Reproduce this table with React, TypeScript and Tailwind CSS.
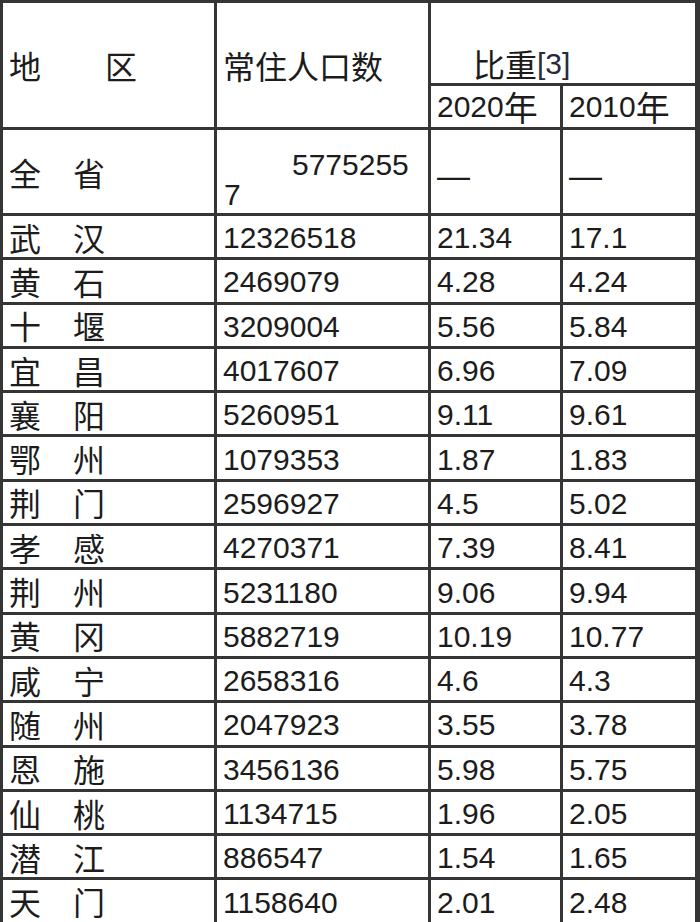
import React from 'react'

const rows: [string, string, string, string][] = [
  ['武　汉', '12326518', '21.34', '17.1'],
  ['黄　石', '2469079', '4.28', '4.24'],
  ['十　堰', '3209004', '5.56', '5.84'],
  ['宜　昌', '4017607', '6.96', '7.09'],
  ['襄　阳', '5260951', '9.11', '9.61'],
  ['鄂　州', '1079353', '1.87', '1.83'],
  ['荆　门', '2596927', '4.5', '5.02'],
  ['孝　感', '4270371', '7.39', '8.41'],
  ['荆　州', '5231180', '9.06', '9.94'],
  ['黄　冈', '5882719', '10.19', '10.77'],
  ['咸　宁', '2658316', '4.6', '4.3'],
  ['随　州', '2047923', '3.55', '3.78'],
  ['恩　施', '3456136', '5.98', '5.75'],
  ['仙　桃', '1134715', '1.96', '2.05'],
  ['潜　江', '886547', '1.54', '1.65'],
  ['天　门', '1158640', '2.01', '2.48'],
]

const cjk = "font-['Noto_Sans_CJK_SC',sans-serif] text-[32px] leading-[32px]"
const num = "font-['Liberation_Sans','Noto_Sans_CJK_SC',sans-serif] text-[30px] leading-[30px]"

export default function App() {
  return (
    <div className="w-[700px] bg-white text-[#1c1c1c]">
      <div className="grid grid-cols-[211px_211px_129px_132px] grid-rows-[80px_41px_83px_repeat(16,41.3px)] gap-[3px] bg-[#353535] pt-[3px] pl-[3px] pr-[5px] overflow-hidden">
        {/* header */}
        <div className={`row-span-2 bg-white flex items-center pl-[6px] whitespace-pre ${cjk}`}>地　　区</div>
        <div className={`row-span-2 bg-white flex items-center pl-[6px] ${cjk}`}>常住人口数</div>
        <div className="col-span-2 bg-white flex items-end pl-[42px] pb-[4px]">
          <span className={cjk}>比重</span>
          <span className={`${num} text-[#2a2a3a]`}>[3]</span>
        </div>
        <div className={`bg-white flex items-center pl-[6px] ${num}`}>
          2020<span className="font-['Noto_Sans_CJK_SC',sans-serif] text-[34px] leading-[30px]">年</span>
        </div>
        <div className={`bg-white flex items-center pl-[6px] ${num}`}>
          2010<span className="font-['Noto_Sans_CJK_SC',sans-serif] text-[34px] leading-[30px]">年</span>
        </div>

        {/* 全省 */}
        <div className={`bg-white flex items-center pl-[6px] ${cjk}`}>全　省</div>
        <div className={`bg-white flex flex-col pt-[20px] ${num}`}>
          <div className="pl-[75px]">5775255</div>
          <div className="pl-[7px]">7</div>
        </div>
        <div className={`bg-white flex items-center pl-[6px] pt-[8px] ${num} text-[33px]`}>—</div>
        <div className={`bg-white flex items-center pl-[6px] pt-[8px] ${num} text-[33px]`}>—</div>

        {rows.map(([name, pop, a, b]) => (
          <React.Fragment key={name}>
            <div className={`bg-white flex items-center pl-[6px] ${cjk}`}>{name}</div>
            <div className={`bg-white flex items-center pl-[6px] pt-[3px] ${num}`}>{pop}</div>
            <div className={`bg-white flex items-center pl-[6px] pt-[3px] ${num}`}>{a}</div>
            <div className={`bg-white flex items-center pl-[6px] pt-[3px] ${num}`}>{b}</div>
          </React.Fragment>
        ))}
      </div>
    </div>
  )
}
